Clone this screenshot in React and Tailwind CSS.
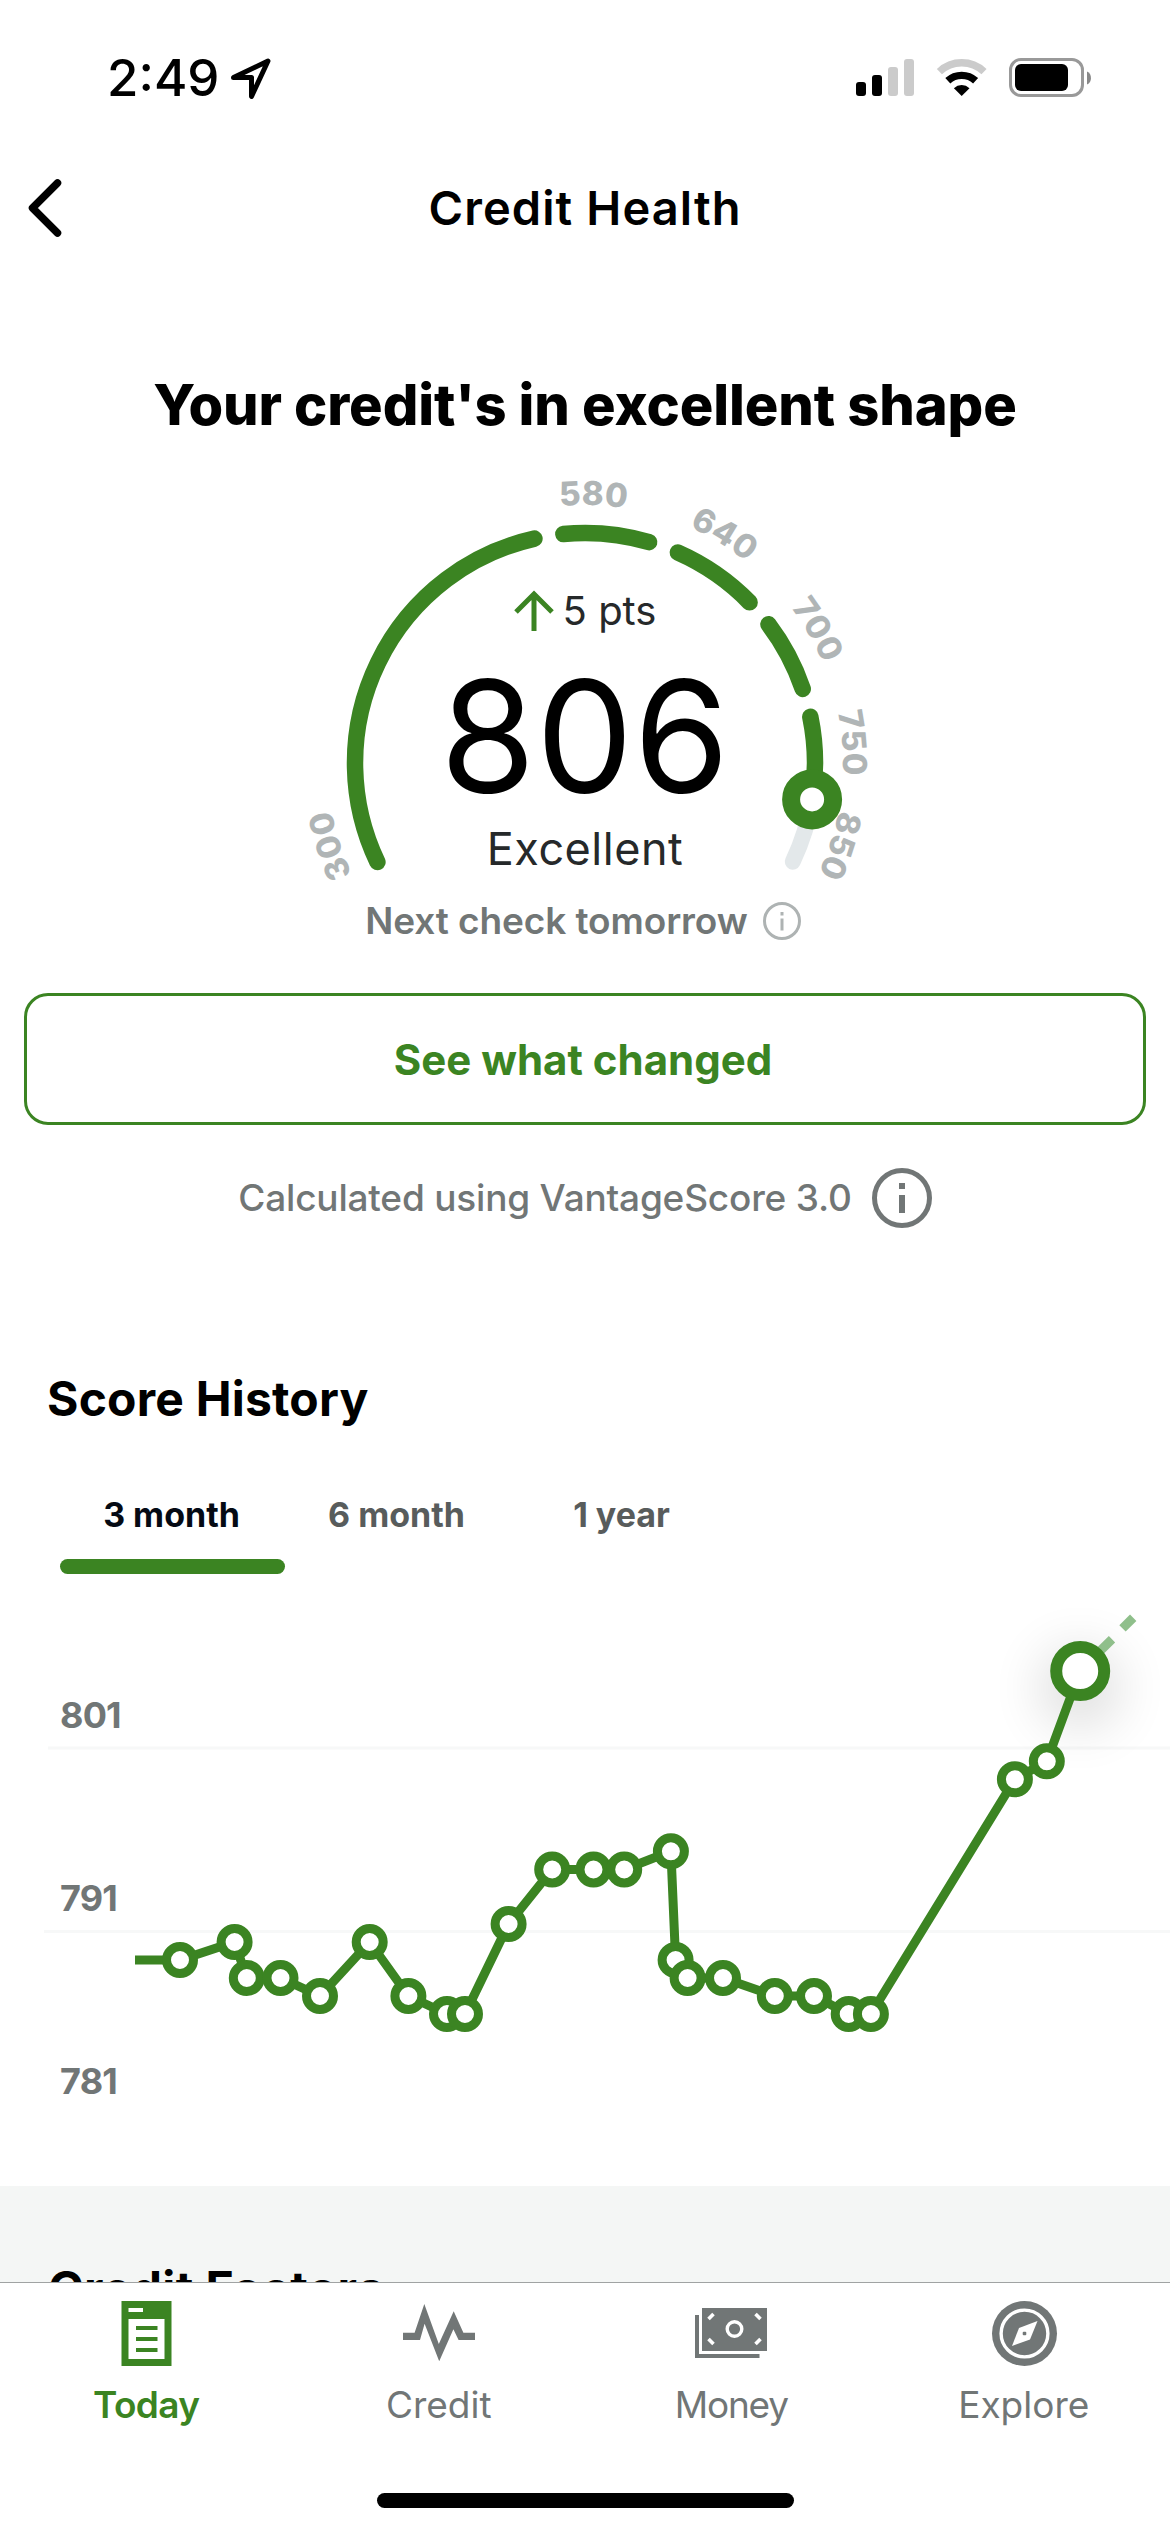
const GREEN = '#3b8422';
const GRAY = '#717676';

const rad = (deg) => (deg * Math.PI) / 180;

// Gauge geometry, angles clockwise from 3 o'clock
const CX = 295;
const CY = 313;
const R = 230;
const LABEL_R = 258;
const LABEL_START = 140;

const segments = [
  [154.5, 257.3],
  [264.6, 286.2],
  [293.8, 315.7],
  [322.9, 341.2],
  [348.4, 369],
];

const gaugeLabels = [
  { value: '300', angle: 162 },
  { value: '580', angle: 271.8 },
  { value: '640', angle: 301.3 },
  { value: '700', angle: 330.1 },
  { value: '750', angle: 355.6 },
  { value: '850', angle: 377.9 },
];

function arc(r, from, to) {
  const x1 = CX + r * Math.cos(rad(from));
  const y1 = CY + r * Math.sin(rad(from));
  const x2 = CX + r * Math.cos(rad(to));
  const y2 = CY + r * Math.sin(rad(to));
  return `M${x1} ${y1}A${r} ${r} 0 ${to - from > 180 ? 1 : 0} 1 ${x2} ${y2}`;
}

const points = [
  [180, 1960], [234.6, 1942], [246.8, 1978], [280.5, 1978], [320, 1996],
  [369.7, 1942], [408.4, 1996], [447, 2014], [465, 2014], [508.6, 1924],
  [552.2, 1869.5], [593.5, 1869.5], [624.2, 1869.5], [670.9, 1851.3],
  [675.6, 1960], [687.6, 1978], [723, 1978], [774.8, 1996], [814, 1996],
  [848.7, 2014], [870.9, 2014], [1014.9, 1779.3], [1046.8, 1761.3],
].map(([x, y]) => [x, y - 1574]);
const latest = [1080.2, 97];

const tabs = ['3 month', '6 month', '1 year'];

function StatusBar() {
  return (
    <div className="flex h-[155px] items-center justify-between pl-[107px] pr-[79px]">
      <div className="flex items-center gap-[10px]">
        <span className="text-[51px] leading-none font-medium">2:49</span>
        <svg width="44" height="44" viewBox="0 0 44 44" className="mt-[3px]" fill="none" stroke="black" strokeWidth="5" strokeLinejoin="round">
          <path d="M4.500 20.500L39 4L22.500 39.500V20.500Z" />
        </svg>
      </div>
      <svg width="235" height="40" viewBox="0 0 235 40">
        <rect x="0" y="24" width="10" height="14" rx="3" />
        <rect x="16" y="17" width="10" height="21" rx="3" />
        <g fill="#cbcbcb">
          <rect x="32" y="9" width="10" height="29" rx="3" />
          <rect x="48" y="1" width="10" height="37" rx="3" />
        </g>
        <g fill="none" strokeWidth="7.4">
          <path d="M83.4 13.6A32.5 32.5 0 0 1 128 13.6" stroke="#cbcbcb" />
          <path d="M91.8 22.8A20.5 20.5 0 0 1 119.6 22.8" stroke="black" />
        </g>
        <path d="M105.7 38L97.9 30.2A11.4 11.4 0 0 1 113.5 30.2Z" />
        <rect x="154.5" y="1.5" width="72" height="36" rx="10.5" fill="none" stroke="#999" strokeWidth="3" />
        <rect x="159" y="6" width="53" height="27" rx="6" />
        <path d="M231 13.5C236.3 15.5 236.3 24.5 231 26.5Z" fill="#888" />
      </svg>
    </div>
  );
}

function Header() {
  return (
    <div className="grid h-[106px] grid-cols-[100px_1fr_100px] items-center">
      <svg width="36" height="60" viewBox="0 0 36 60" className="ml-[27px]" fill="none" stroke="black" strokeWidth="7.5" strokeLinecap="round" strokeLinejoin="round">
        <path d="M30.5 5L5.5 30L30.5 55" />
      </svg>
      <h2 className="pb-[2px] text-center text-[47px] leading-none font-[580] tracking-[1.1px]">Credit Health</h2>
    </div>
  );
}

function InfoIcon({ size, stroke, color, children }) {
  const r = (size - stroke) / 2;
  return (
    <svg width={size} height={size} viewBox={`0 0 ${size} ${size}`} fill={color}>
      <circle cx={size / 2} cy={size / 2} r={r} fill="none" stroke={color} strokeWidth={stroke} />
      {children}
    </svg>
  );
}

function ScoreGauge() {
  const knobX = CX + R * Math.cos(rad(369.1));
  const knobY = CY + R * Math.sin(rad(369.1));
  return (
    <div className="relative mx-auto mt-[9px] h-[440px] w-[590px]">
      <svg width="590" height="440" viewBox="0 0 590 440" fill="none">
        <path id="label-arc" d={arc(LABEL_R, LABEL_START, 410)} />
        <path d={arc(R, 369, 385.4)} stroke="#e3e8ea" strokeWidth="16" strokeLinecap="round" />
        {segments.map(([from, to]) => (
          <path key={from} d={arc(R, from, to)} stroke={GREEN} strokeWidth="16.5" strokeLinecap="round" />
        ))}
        {gaugeLabels.map(({ value, angle }) => (
          <text key={value} fill="#b0b5b6" textAnchor="middle" className="text-[33px] font-extrabold tracking-[0.3px]">
            <textPath href="#label-arc" startOffset={rad(angle - LABEL_START) * LABEL_R}>{value}</textPath>
          </text>
        ))}
        <circle cx={knobX} cy={knobY} r="21" fill="white" stroke={GREEN} strokeWidth="18" />
      </svg>
      <div className="absolute inset-0 flex flex-col items-center">
        <div className="mt-[131px] flex h-[60px] items-center gap-[9px] text-[#26292a]">
          <svg width="40" height="42" viewBox="0 0 40 42" fill="none" stroke={GREEN} strokeWidth="5">
            <path d="M20 41V4M2 22L20 4L38 22" />
          </svg>
          <span className="text-[40px] leading-none">5 pts</span>
        </div>
        <div className="mt-[15px] text-[154px] leading-[160px] tracking-[0.5px]">806</div>
        <div className="mt-[3px] text-[45px] leading-[60px] tracking-[0.5px] text-[#26292a]">Excellent</div>
      </div>
    </div>
  );
}

function ScoreChart() {
  const line = [[135, 386], ...points, latest].map((p) => p.join(',')).join(' ');
  return (
    <svg width="1170" height="612" viewBox="0 0 1170 612" className="block">
      <defs>
        <filter id="soft" x="-150%" y="-150%" width="400%" height="400%">
          <feGaussianBlur stdDeviation="26" />
        </filter>
      </defs>
      <path d="M48 174H1170M44 357.5H1170" stroke="#f7f8f8" strokeWidth="3" />
      <g fill={GRAY} className="text-[36px] font-bold tracking-[-0.8px]">
        <text x="60" y="154">801</text>
        <text x="60" y="337">791</text>
        <text x="60" y="520">781</text>
      </g>
      <circle cx="1080" cy="114" r="40" fill="black" opacity="0.13" filter="url(#soft)" />
      <polyline points={line} fill="none" stroke={GREEN} strokeWidth="9" />
      <path d="M1098 79L1112 65.2M1122.5 54.4L1133.2 43.7" stroke="#8fbf8b" strokeWidth="9" />
      {points.map(([x, y]) => (
        <circle key={x} cx={x} cy={y} r="13.5" fill="white" stroke={GREEN} strokeWidth="9" />
      ))}
      <circle cx={latest[0]} cy={latest[1]} r="24" fill="white" stroke={GREEN} strokeWidth="12" />
    </svg>
  );
}

function TodayIcon() {
  return (
    <svg width="72" height="72" viewBox="0 0 72 72">
      <path d="M11.5 3H61.5V68H11.5Z" fill={GREEN} />
      <path d="M18.5 10H33V14H18.5ZM18.5 21H54.5V61H18.5Z" fill="white" />
      <path d="M26 28H47.5V32H26ZM26 39H47.5V43H26ZM26 50H47.5V54H26Z" fill={GREEN} />
    </svg>
  );
}

function CreditIcon() {
  return (
    <svg width="72" height="72" viewBox="0 0 72 72" fill={GRAY}>
      <path d="M0 34.7H11.6L21.3 6L35.8 46L50.7 13.3L60.4 34.7H72V42H55.6L50.4 31.3L36.2 63.3L21.6 25.7L17 42H0Z" />
    </svg>
  );
}

function MoneyIcon() {
  return (
    <svg width="72" height="72" viewBox="0 0 72 72">
      <path d="M0 17H4V56H64.5V60H0Z" fill={GRAY} />
      <path d="M7 10H72V53H7Z" fill={GRAY} />
      <circle cx="39.5" cy="31" r="7.3" fill="none" stroke="white" strokeWidth="3.4" />
      <path d="M13.5 21L18.5 16M60.5 16L65.5 21M13.5 41L18.5 46M60.5 46L65.5 41" stroke="white" strokeWidth="3.6" />
    </svg>
  );
}

function ExploreIcon() {
  return (
    <svg width="72" height="72" viewBox="0 0 72 72">
      <circle cx="36.5" cy="35.5" r="32.5" fill={GRAY} />
      <circle cx="36.5" cy="35.5" r="23.4" fill="none" stroke="white" strokeWidth="3.4" />
      <path d="M49.5 23L31 30L24 48L42 41.5Z" fill="white" />
      <rect x="34.7" y="33.7" width="3.6" height="3.6" rx="1" fill={GRAY} />
    </svg>
  );
}

const navItems = [
  { label: 'Today', Icon: TodayIcon, style: 'font-semibold tracking-[-0.6px] text-[#3b8422]' },
  { label: 'Credit', Icon: CreditIcon, style: 'text-[#717676]' },
  { label: 'Money', Icon: MoneyIcon, style: 'tracking-[-1.2px] text-[#717676]' },
  { label: 'Explore', Icon: ExploreIcon, style: 'text-[#717676]' },
];

function BottomNav() {
  return (
    <nav className="h-[250px] border-t border-[#a0a3a3] bg-white">
      <div className="grid grid-cols-4 pt-[15px]">
        {navItems.map(({ label, Icon, style }) => (
          <div key={label} className="flex flex-col items-center">
            <Icon />
            <span className={`mt-[13px] text-[37px] leading-[44px] ${style}`}>{label}</span>
          </div>
        ))}
      </div>
      <div className="mx-auto mt-[66px] h-[15px] w-[417px] rounded-full bg-black" />
    </nav>
  );
}

function App() {
  return (
    <div className="h-[2532px] w-[1170px] overflow-hidden bg-white font-['Inter',sans-serif] text-black">
      <StatusBar />
      <Header />

      <h1 className="mt-[108px] text-center text-[56px] leading-[72px] font-extrabold tracking-[-0.1px]">
        Your credit's in excellent shape
      </h1>
      <ScoreGauge />
      <div className="flex h-[62px] items-center justify-center gap-[15px] pr-[4px]">
        <span className="pb-px text-[37px] leading-none font-semibold tracking-[-0.1px] text-[#717676]">Next check tomorrow</span>
        <InfoIcon size={38} stroke={3} color="#aeb3b3">
          <path d="M17.5 10H20.5V13.5H17.5ZM17.5 16.5H20.5V28.5H17.5Z" />
        </InfoIcon>
      </div>

      <button type="button" className="mx-6 mt-[41px] flex h-[132px] w-[1122px] items-center justify-center rounded-[24px] border-3 border-[#3b8422] pr-1 text-[42px] font-bold text-[#3b8422]">
        See what changed
      </button>
      <div className="mt-[43px] flex h-[60px] items-center justify-center gap-[20px]">
        <span className="pb-px text-[37px] leading-none font-[550] tracking-[-0.2px] text-[#717676]">
          Calculated using VantageScore 3.0
        </span>
        <InfoIcon size={60} stroke={5} color={GRAY}>
          <path d="M27 15H33V21H27ZM27 27H33V45H27Z" />
        </InfoIcon>
      </div>

      <h3 className="mt-[141px] pl-[47px] text-[48px] leading-[60px] font-bold tracking-[0.2px]">Score History</h3>
      <div className="mt-[56px] ml-[60px] flex">
        {tabs.map((tab, i) => (
          <div key={tab} className="w-[225px]">
            <div className={`pr-[2px] text-center text-[34px] leading-[60px] font-bold ${i === 0 ? 'text-[#050a14]' : 'text-[#585c5c]'}`}>
              {tab}
            </div>
            <div className={`mt-[14px] h-[15px] rounded-full ${i === 0 ? 'bg-[#3b8422]' : ''}`} />
          </div>
        ))}
      </div>
      <ScoreChart />

      <div className="h-[96px] overflow-hidden bg-[#f4f6f5] pt-[73px] pl-[48px]">
        <h3 className="text-[48px] leading-[60px] font-bold tracking-[0.4px]">Credit Factors</h3>
      </div>
      <BottomNav />
    </div>
  );
}

export default App;
